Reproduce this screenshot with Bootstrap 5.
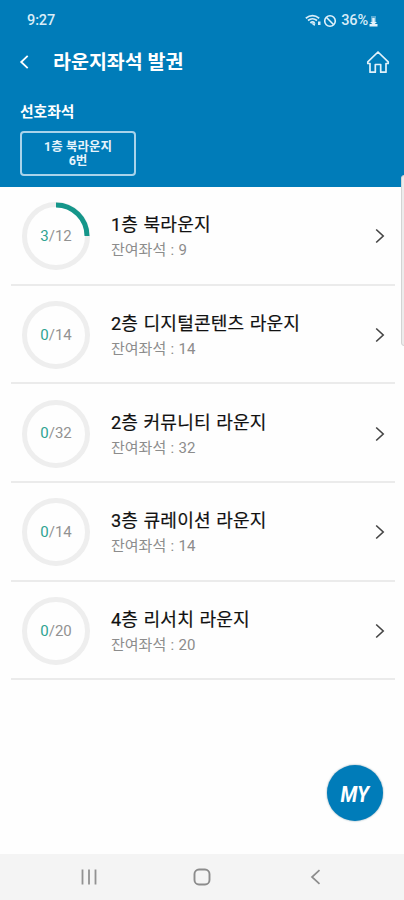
<!DOCTYPE html>
<html lang="ko">
<head>
<meta charset="utf-8">
<meta name="viewport" content="width=device-width, initial-scale=1">
<title>라운지좌석 발권</title>
<link rel="stylesheet" href="https://cdn.jsdelivr.net/npm/bootstrap@5.3.0/dist/css/bootstrap.min.css">
<style>
body{font-family:Roboto,"Noto Sans CJK KR",sans-serif;height:900px;overflow:hidden;background:#fefefe}
svg{display:block;flex:none}
.app-head{background:#007cb9;height:187px}
.status{height:41px;padding:1px 25px 0 27px;font-size:14.5px;font-weight:500;line-height:40px;letter-spacing:-.1px;color:#d9edf8}
.status-block{margin-left:1px}
.title-bar{height:41px;padding:0 14px 0 19px}
.page-title{font-size:19.5px;font-weight:700;line-height:39px;padding-top:2px;margin-left:23px}
.pref-label{font-size:14.8px;font-weight:700;line-height:20px;margin:20px 0 0 20px}
.pref-btn{width:116px;height:45px;margin:9px 0 0 20px;padding:0;border:2px solid #a9d3ea;border-radius:4px;font-size:12.5px;font-weight:700;line-height:14px;color:#e6f4fc}
.seat-list{padding:0 9px 0 11px}
.seat-row{height:98.7px;padding:2px 10px 0 10px;border-bottom:2px solid #ebebeb}
.ring{width:70px;height:70px}
.ring-num{font-size:15px;color:#929292;letter-spacing:.05px}
.ring-num span{color:#2fa392}
.seat-info{margin-left:20px;padding-top:2px}
.seat-name{font-size:18.1px;line-height:26px;color:#111;letter-spacing:.15px;word-spacing:.8px;font-weight:400}
.seat-name{-webkit-text-stroke:.2px #111}
.seat-left{font-size:15px;line-height:24px;color:#8c8c8c;word-spacing:.6px}
.edge-handle{top:175px;right:-4px;width:7px;height:171px;border:1px solid #d3d3d3;border-radius:3px;background:#ececec}
.fab{left:327px;top:765px;width:56px;height:56px;padding-top:2px;background:#007cb9;box-shadow:0 0 2px #7197aa;font-size:22px;font-weight:700;font-style:italic}
.fab span{transform:scaleX(.9)}
.sys-nav{height:46px;background:#f4f4f4;padding:0 83px 0 81px}
.nav-home{margin-right:4px}
</style>
</head>
<body class="d-flex flex-column position-relative m-0">
<header class="app-head text-white flex-shrink-0">
  <div class="status d-flex align-items-center justify-content-between">
    <span>9:27</span>
    <div class="d-flex align-items-center">
      <svg width="17" height="14" viewBox="0 0 17 14" fill="none" stroke="#d9edf8" stroke-width="1.700"><path d="M.8 4.200Q7.500-.8 14.200 4.200M3 6.500Q7.500 3 12 6.500M5.300 8.800Q7.500 7 9.700 8.800"/><path d="M6 9.300h4.500L9.500 12zM13 7.500h2.500V11H13z" fill="#d9edf8" stroke="none"/></svg>
      <svg class="status-block" width="14" height="14" viewBox="0 0 14 14" fill="none" stroke="#e3f2fb" stroke-width="1.600"><circle cx="7" cy="7" r="5.300"/><path d="M3.300 3.300l7.400 7.400"/></svg>
      <span class="ms-1">36%</span>
      <svg width="11" height="14" viewBox="0 0 10 14" fill="#e3f2fb"><path opacity=".4" d="M2.500 2h5v6h-5z"/><path d="M3.800 4h2.400v4h2.300L5 11 1.500 8h2.300zM1 10h8v2.500H1z"/></svg>
    </div>
  </div>
  <div class="title-bar d-flex align-items-center">
    <svg width="11" height="16" viewBox="0 0 11 16" fill="none" stroke="#fff" stroke-width="1.800"><path d="M8.700 1.800L2.200 8l6.500 6.200"/></svg>
    <div class="page-title">라운지좌석 발권</div>
    <svg class="ms-auto" width="24" height="24" viewBox="0 0 24 24" fill="none" stroke="#e1f1fa" stroke-width="1.700" stroke-linejoin="round"><path d="M12 2L1.800 11.800V13.500H4V22.200H9.300V14.500H14.700V22.200H20V13.500H22.200V11.800z"/></svg>
  </div>
  <div class="pref-label">선호좌석</div>
  <button class="pref-btn btn d-block" type="button">1층 북라운지<br>6번</button>
</header>

<main class="seat-list flex-grow-1">
  <div class="seat-row d-flex align-items-center">
    <div class="ring position-relative d-flex align-items-center justify-content-center">
      <svg class="position-absolute top-0 start-0" width="70" height="70" viewBox="0 0 70 70" fill="none" stroke-width="5"><circle cx="35" cy="35" r="31.500" stroke="#eee"/><path d="M35 4A31 31 0 0 1 66 35" stroke="#15968a"/></svg>
      <div class="ring-num"><span>3</span>/12</div>
    </div>
    <div class="seat-info"><div class="seat-name">1층 북라운지</div><div class="seat-left">잔여좌석 : 9</div></div>
    <svg class="ms-auto" width="10" height="16" viewBox="0 0 10 16" fill="none" stroke="#444" stroke-width="1.600"><path d="M1.200 1.500L8.200 8l-7 6.500"/></svg>
  </div>
  <div class="seat-row d-flex align-items-center">
    <div class="ring position-relative d-flex align-items-center justify-content-center">
      <svg class="position-absolute top-0 start-0" width="70" height="70" viewBox="0 0 70 70" fill="none" stroke-width="5"><circle cx="35" cy="35" r="31.500" stroke="#eee"/></svg>
      <div class="ring-num"><span>0</span>/14</div>
    </div>
    <div class="seat-info"><div class="seat-name">2층 디지털콘텐츠 라운지</div><div class="seat-left">잔여좌석 : 14</div></div>
    <svg class="ms-auto" width="10" height="16" viewBox="0 0 10 16" fill="none" stroke="#444" stroke-width="1.600"><path d="M1.200 1.500L8.200 8l-7 6.500"/></svg>
  </div>
  <div class="seat-row d-flex align-items-center">
    <div class="ring position-relative d-flex align-items-center justify-content-center">
      <svg class="position-absolute top-0 start-0" width="70" height="70" viewBox="0 0 70 70" fill="none" stroke-width="5"><circle cx="35" cy="35" r="31.500" stroke="#eee"/></svg>
      <div class="ring-num"><span>0</span>/32</div>
    </div>
    <div class="seat-info"><div class="seat-name">2층 커뮤니티 라운지</div><div class="seat-left">잔여좌석 : 32</div></div>
    <svg class="ms-auto" width="10" height="16" viewBox="0 0 10 16" fill="none" stroke="#444" stroke-width="1.600"><path d="M1.200 1.500L8.200 8l-7 6.500"/></svg>
  </div>
  <div class="seat-row d-flex align-items-center">
    <div class="ring position-relative d-flex align-items-center justify-content-center">
      <svg class="position-absolute top-0 start-0" width="70" height="70" viewBox="0 0 70 70" fill="none" stroke-width="5"><circle cx="35" cy="35" r="31.500" stroke="#eee"/></svg>
      <div class="ring-num"><span>0</span>/14</div>
    </div>
    <div class="seat-info"><div class="seat-name">3층 큐레이션 라운지</div><div class="seat-left">잔여좌석 : 14</div></div>
    <svg class="ms-auto" width="10" height="16" viewBox="0 0 10 16" fill="none" stroke="#444" stroke-width="1.600"><path d="M1.200 1.500L8.200 8l-7 6.500"/></svg>
  </div>
  <div class="seat-row d-flex align-items-center">
    <div class="ring position-relative d-flex align-items-center justify-content-center">
      <svg class="position-absolute top-0 start-0" width="70" height="70" viewBox="0 0 70 70" fill="none" stroke-width="5"><circle cx="35" cy="35" r="31.500" stroke="#eee"/></svg>
      <div class="ring-num"><span>0</span>/20</div>
    </div>
    <div class="seat-info"><div class="seat-name">4층 리서치 라운지</div><div class="seat-left">잔여좌석 : 20</div></div>
    <svg class="ms-auto" width="10" height="16" viewBox="0 0 10 16" fill="none" stroke="#444" stroke-width="1.600"><path d="M1.200 1.500L8.200 8l-7 6.500"/></svg>
  </div>
</main>

<nav class="sys-nav d-flex align-items-center justify-content-between flex-shrink-0">
  <svg width="16" height="16" viewBox="0 0 16 16" stroke="#929292" stroke-width="1.800"><path d="M1.500 .5v15M8 .5v15M14.500 .5v15"/></svg>
  <svg class="nav-home" width="18" height="18" viewBox="0 0 18 18" fill="none" stroke="#8c8c8c" stroke-width="1.900"><rect x="1.500" y="1.500" width="15" height="15" rx="4.500"/></svg>
  <svg width="11" height="16" viewBox="0 0 11 16" fill="none" stroke="#8c8c8c" stroke-width="1.700"><path d="M9.500 1.200L2 8l7.500 6.800"/></svg>
</nav>

<div class="edge-handle position-absolute"></div>
<a class="fab position-absolute rounded-circle d-flex align-items-center justify-content-center text-white text-decoration-none" href="#"><span>MY</span></a>
<script src="https://cdn.jsdelivr.net/npm/bootstrap@5.3.0/dist/js/bootstrap.bundle.min.js"></script>
</body>
</html>
